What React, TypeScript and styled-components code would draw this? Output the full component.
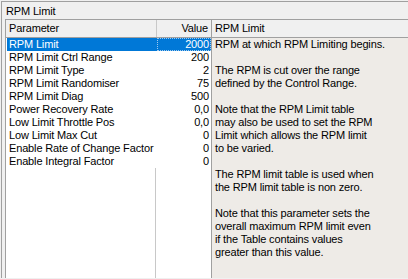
import React from 'react'
import styled, { createGlobalStyle } from 'styled-components'

type Param = { name: string; value: string }

const params: Param[] = [
  { name: 'RPM Limit', value: '2000' },
  { name: 'RPM Limit Ctrl Range', value: '200' },
  { name: 'RPM Limit Type', value: '2' },
  { name: 'RPM Limit Randomiser', value: '75' },
  { name: 'RPM Limit Diag', value: '500' },
  { name: 'Power Recovery Rate', value: '0,0' },
  { name: 'Low Limit Throttle Pos', value: '0,0' },
  { name: 'Low Limit Max Cut', value: '0' },
  { name: 'Enable Rate of Change Factor', value: '0' },
  { name: 'Enable Integral Factor', value: '0' },
]

const help = [
  'RPM at which RPM Limiting begins.',
  '',
  'The RPM is cut over the range',
  'defined by the Control Range.',
  '',
  'Note that the RPM Limit table',
  'may also be used to set the RPM',
  'Limit which allows the RPM limit',
  'to be varied.',
  '',
  'The RPM limit table is used when',
  'the RPM limit table is non zero.',
  '',
  'Note that this parameter sets the',
  'overall maximum RPM limit even',
  'if the Table contains values',
  'greater than this value.',
]

const GlobalStyle = createGlobalStyle`
  html, body {
    margin: 0;
    padding: 0;
    background: #f0f0f0;
  }
  body {
    font-family: "Liberation Sans", Arial, sans-serif;
    font-size: 11px;
    letter-spacing: -0.15px;
    color: #000;
  }
`

const Frame = styled.div`
  width: 407px;
  height: 277px;
  margin-top: 1px;
  margin-left: 1px;
  border-top: 1px solid #a0a0a0;
  border-left: 1px solid #a0a0a0;
  padding-left: 3px;
  display: flex;
  flex-direction: column;
  overflow: hidden;
  box-sizing: border-box;
`

const Title = styled.div`
  height: 17px;
  padding: 3px 0 0 1px;
  line-height: 13px;
  box-sizing: border-box;
`

const Panel = styled.div`
  flex: 1;
  display: grid;
  grid-template-columns: 205px 1fr;
  border-top: 1px solid #a0a0a0;
  border-left: 1px solid #a0a0a0;
  min-height: 0;
`

const List = styled.div`
  display: flex;
  flex-direction: column;
  background: #fff;
`

const HeaderRow = styled.div`
  display: grid;
  grid-template-columns: 151px 1fr;
  height: 18px;
  background: #f0f0f0;
  border-bottom: 1px solid #a0a0a0;
  box-sizing: border-box;
`

const HeadCell = styled.div<{ $right?: boolean }>`
  line-height: 17px;
  padding: 0 3px;
  text-align: ${(p) => (p.$right ? 'right' : 'left')};
  border-right: ${(p) => (p.$right ? 'none' : '1px solid #c8c8c8')};
  white-space: nowrap;
`

const Row = styled.div<{ $selected?: boolean }>`
  display: grid;
  grid-template-columns: 150px 1fr;
  height: 13px;
  line-height: 13px;
  margin-left: 1px;
  background: ${(p) => (p.$selected ? '#0078d7' : 'transparent')};
  color: ${(p) => (p.$selected ? '#fff' : '#000')};
  white-space: nowrap;
`

const NameCell = styled.div`
  padding-left: 2px;
`

const ValueCell = styled.div<{ $focus?: boolean }>`
  text-align: right;
  padding-right: 2px;
  box-sizing: border-box;
  outline: ${(p) => (p.$focus ? '1px dotted #9fc9ef' : 'none')};
  outline-offset: -1px;
`

const Filler = styled.div`
  flex: 1;
  display: grid;
  grid-template-columns: 150px 1fr;
`

const FillerCol = styled.div`
  border-right: 1px solid #c8c8c8;
`

const Help = styled.div`
  display: flex;
  flex-direction: column;
  border-left: 1px solid #a0a0a0;
  background: #eeebe7;
`

const HelpHeader = styled.div`
  height: 18px;
  line-height: 17px;
  padding-left: 3px;
  background: #f0f0f0;
  border-bottom: 1px solid #a0a0a0;
  box-sizing: border-box;
`

const HelpText = styled.div`
  padding-left: 3px;
  line-height: 13px;
  white-space: pre;
`

const HelpLine = styled.div`
  height: 13px;
`

export default function App() {
  return (
    <>
      <GlobalStyle />
      <Frame>
        <Title>RPM Limit</Title>
        <Panel>
          <List>
            <HeaderRow>
              <HeadCell>Parameter</HeadCell>
              <HeadCell $right>Value</HeadCell>
            </HeaderRow>
            {params.map((p, i) => (
              <Row key={p.name} $selected={i === 0}>
                <NameCell>{p.name}</NameCell>
                <ValueCell $focus={i === 0}>{p.value}</ValueCell>
              </Row>
            ))}
            <Filler>
              <FillerCol />
              <div />
            </Filler>
          </List>
          <Help>
            <HelpHeader>RPM Limit</HelpHeader>
            <HelpText>
              {help.map((line, i) => (
                <HelpLine key={i}>{line}</HelpLine>
              ))}
            </HelpText>
          </Help>
        </Panel>
      </Frame>
    </>
  )
}
